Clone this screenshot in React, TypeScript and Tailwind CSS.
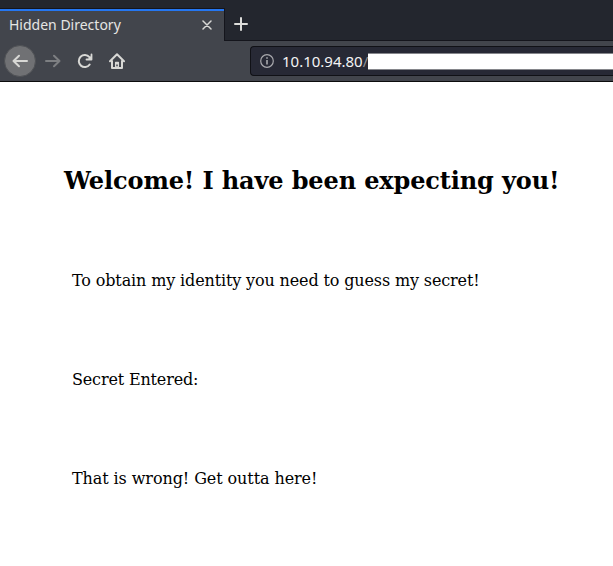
function BackIcon() {
  return (
    <svg width="16" height="16" viewBox="0 0 16 16" fill="none" stroke="currentColor" strokeWidth="2" strokeLinecap="round" strokeLinejoin="round">
      <path d="M15 8H1.5M7 2.8L1.5 8l5.5 5.2" />
    </svg>
  );
}

function ForwardIcon() {
  return (
    <svg width="16" height="16" viewBox="0 0 16 16" fill="none" stroke="currentColor" strokeWidth="2" strokeLinecap="round" strokeLinejoin="round">
      <path d="M1 8h13.5M9 2.8l5.5 5.2L9 13.2" />
    </svg>
  );
}

function ReloadIcon() {
  return (
    <svg width="16" height="16" viewBox="0 0 16 16" fill="none" stroke="currentColor" strokeWidth="2" strokeLinecap="round">
      <path d="M12.7 11.5A6 6 0 1 1 12.4 4.2" />
      <path d="M14.5 1.5V6.5H9.5" strokeWidth="1.8" strokeLinejoin="round" />
      <path d="M14.5 2.5v4h-4z" fill="currentColor" stroke="none" />
    </svg>
  );
}

function HomeIcon() {
  return (
    <svg width="16" height="16" viewBox="0 0 16 16" fill="none" stroke="currentColor" strokeWidth="2" strokeLinecap="round" strokeLinejoin="round">
      <path d="M1 8.2L8 1.3l7 6.9M3 8v7h10V8" />
      <path d="M6.6 14.5V9.4h2.8v5.1" strokeWidth="1.3" />
      <path d="M6.5 9.2h3v2.3h-3zM6.5 13.2h3V15h-3z" fill="currentColor" stroke="none" />
    </svg>
  );
}

export default function App() {
  return (
    <div className="flex h-[566px] w-[613px] flex-col overflow-hidden bg-white">
      <div className="flex h-[41px] shrink-0 bg-[#23262e]">
        <div className="mt-[8px] flex h-[33px] w-[225px] items-center justify-between border-r border-t border-[#14151c] bg-[#42454c] font-['Noto_Sans',sans-serif] text-[14px] text-[#e6e6e4]">
          <div className="flex h-full w-full items-center justify-between border-t-2 border-[#2577f2] pb-[2px] pl-[9px] pr-[12px]">
            <span className="pb-px leading-[26px]">Hidden Directory</span>
            <svg width="10" height="10" viewBox="0 0 10 10" stroke="#d8d8d5" strokeWidth="1.5" strokeLinecap="round">
              <path d="M1 1l8 8M9 1L1 9" />
            </svg>
          </div>
        </div>
        <div className="flex flex-1 border-b border-[#14151c] pl-[9px] pt-[17px]">
          <svg width="14" height="14" viewBox="0 0 14 14" stroke="#dddddb" strokeWidth="2" strokeLinecap="round">
            <path d="M7 1v12M1 7h12" />
          </svg>
        </div>
      </div>
      <div className="flex h-[41px] shrink-0 items-center border-b border-[#0c0c0d] bg-[#42454c] pl-[4px] text-[#d8d8d5]">
        <div className="flex size-[32px] items-center justify-center rounded-full border border-[#4f5155] bg-[#707174]">
          <BackIcon />
        </div>
        <div className="ml-[9px] text-[#7d7f82]"><ForwardIcon /></div>
        <div className="ml-[16px]"><ReloadIcon /></div>
        <div className="ml-[16px]"><HomeIcon /></div>
        <div className="ml-[125px] flex h-[30px] flex-1 items-center rounded-l-[4px] border border-r-0 border-[#101116] bg-[#272935] pl-[9px]">
          <svg width="14" height="14" viewBox="0 0 14 14" fill="none" stroke="#a9a9ad">
            <circle cx="7" cy="7" r="6.3" strokeWidth="1.2" />
            <path d="M7 6v4.5M7 3.2v1.6" strokeWidth="1.6" />
          </svg>
          <span className="ml-[8px] w-[86px] whitespace-nowrap font-['Noto_Sans',sans-serif] text-[15px] leading-[20px] text-[#f4f4f4]">
            10.10.94.80<span className="text-[#8e8f96]">/</span>
          </span>
          <div className="h-[17px] flex-1 border-y border-[#85868b] bg-white" />
        </div>
      </div>
      <main className="font-['DejaVu_Serif',serif] text-[16px] leading-[19px] text-black">
        <h1 className="ml-[64px] mt-[85px] whitespace-nowrap text-[24px] font-bold leading-[28px] tracking-[-0.125px]">Welcome! I have been expecting you!</h1>
        <p className="ml-[72px] mt-[76px] tracking-[-0.135px]">To obtain my identity you need to guess my secret!</p>
        <p className="ml-[72px] mt-[80px] tracking-[-0.16px]">Secret Entered:</p>
        <p className="ml-[72px] mt-[80px] tracking-[-0.09px]">That is wrong! Get outta here!</p>
      </main>
    </div>
  );
}
